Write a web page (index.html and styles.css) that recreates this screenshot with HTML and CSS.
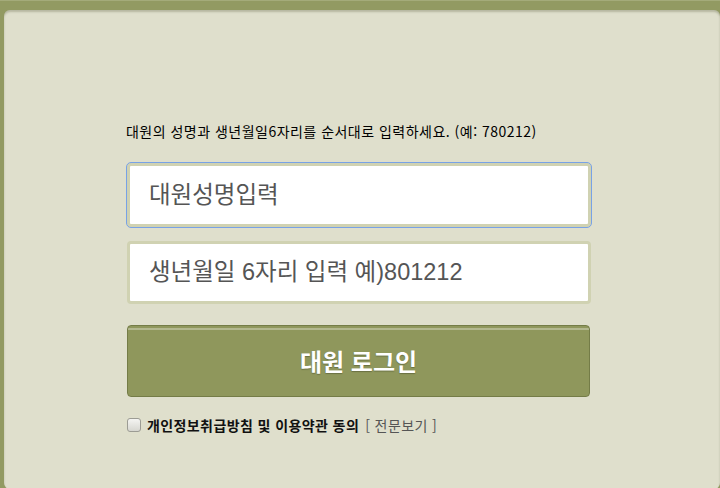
FILE: index.html
```html
<!DOCTYPE html>
<html lang="ko">
<head>
    <meta charset="UTF-8">
    <meta name="viewport" content="width=device-width, initial-scale=1.0">
    <title>대원 로그인</title>
    <link rel="stylesheet" href="styles.css">
</head>
<body>
    <div class="panel">
        <form class="login-form" onsubmit="return false;">
            <p class="guide">대원의 성명과 생년월일6자리를 순서대로 입력하세요. (예: 780212)</p>
            <input type="text" class="field field-active" placeholder="대원성명입력">
            <input type="text" class="field" placeholder="생년월일 6자리 입력 예)801212">
            <button type="submit" class="login-btn">대원 로그인</button>
            <label class="agree">
                <input type="checkbox" class="agree-check">
                <span class="agree-text">개인정보취급방침 및 이용약관 동의</span>
                <a href="#" class="agree-link">[ 전문보기 ]</a>
            </label>
        </form>
    </div>
</body>
</html>
```

FILE: styles.css
```css
html, body {
    margin: 0;
    padding: 0;
}

body {
    background-color: #929a62;
    border-top: 1px solid #a4ab7a;
    font-family: "Noto Sans CJK KR", "Liberation Sans", sans-serif;
    height: 487px;
    overflow: hidden;
}

.panel {
    margin: 9px 0 0 4px;
    height: 479px;
    background-color: #dfdfcc;
    border-radius: 6px;
    box-shadow: inset 0 2px 2px rgba(60, 64, 30, 0.25);
}

.login-form {
    width: 464px;
    margin-left: 123px;
    padding-top: 112px;
    display: flex;
    flex-direction: column;
}

.guide {
    margin: 0 0 23px -1px;
    font-size: 14px;
    letter-spacing: 0.48px;
    line-height: 18px;
    color: #000;
}

.field {
    box-sizing: border-box;
    width: 464px;
    height: 64px;
    margin: 0 0 14px 0;
    padding: 0 0 0 19px;
    border: 3px solid #d0d2b2;
    border-radius: 4px;
    background: #fff;
    font-family: "Liberation Sans", "Noto Sans CJK KR", sans-serif;
    font-size: 23.5px;
    color: #333;
    outline: none;
}

.field::placeholder {
    color: #555;
}

.field-active {
    outline: 1px solid #78a2e6;
}

.field + .field {
    height: 63px;
    margin-bottom: 21px;
}

.login-btn {
    box-sizing: border-box;
    width: 463px;
    height: 72px;
    border: 1px solid #747c47;
    border-radius: 4px;
    background: linear-gradient(to bottom, #8f975c 0, #8f975c 2px, #b3b88f 2px, #b3b88f 4px, #8f975c 4px);
    color: #fff;
    font-family: "Noto Sans CJK KR", sans-serif;
    font-size: 24px;
    font-weight: bold;
    padding-bottom: 3px;
    text-shadow: 0 1px 1px rgba(40, 44, 20, 0.35);
    cursor: pointer;
}

.agree {
    display: flex;
    align-items: center;
    margin-top: 19px;
    font-size: 14px;
    letter-spacing: 0.4px;
    line-height: 18px;
}

.agree-check {
    appearance: none;
    box-sizing: border-box;
    width: 14px;
    height: 14px;
    margin: 0 6px 0 0;
    border: 1px solid #9c9c94;
    border-radius: 3px;
    background: linear-gradient(to bottom, #f4f4f2, #d6d6d0);
}

.agree-text {
    font-weight: bold;
    color: #111;
}

.agree-link {
    margin-left: 6px;
    color: #555;
    text-decoration: none;
}
```
